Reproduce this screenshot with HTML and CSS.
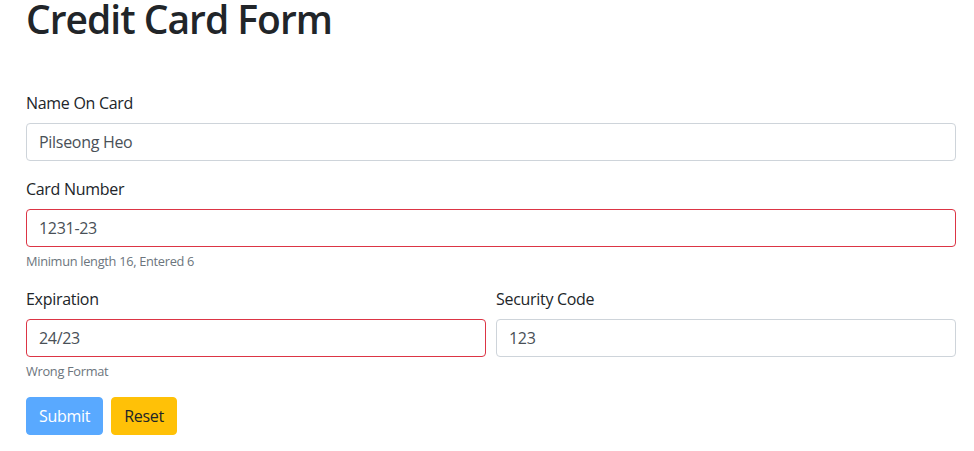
FILE: index.html
```html
<!DOCTYPE html>
<html lang="en">
<head>
<meta charset="utf-8">
<title>Credit Card Form</title>
<link rel="stylesheet" href="styles.css">
</head>
<body>
<div class="container">
  <h1 class="title">Credit Card Form</h1>
  <form class="form">
    <div class="form-group">
      <label class="label" for="name">Name On Card</label>
      <input class="input" id="name" type="text" value="Pilseong Heo">
    </div>
    <div class="form-group">
      <label class="label" for="num">Card Number</label>
      <input class="input invalid" id="num" type="text" value="1231-23">
      <small class="help">Minimun length 16, Entered 6</small>
    </div>
    <div class="form-row">
      <div class="form-group col">
        <label class="label" for="exp">Expiration</label>
        <input class="input invalid" id="exp" type="text" value="24/23">
        <small class="help">Wrong Format</small>
      </div>
      <div class="form-group col">
        <label class="label" for="cvc">Security Code</label>
        <input class="input" id="cvc" type="text" value="123">
      </div>
    </div>
    <div class="actions">
      <button class="btn btn-primary" type="submit" disabled>Submit</button>
      <button class="btn btn-warning" type="button">Reset</button>
    </div>
  </form>
</div>
</body>
</html>
```
FILE: styles.css
```css
* { box-sizing: border-box; }
html, body { margin: 0; padding: 0; background: #fff; }
body {
  font-family: "Open Sans", "Noto Sans", sans-serif;
  font-size: 16px;
  line-height: 1.5;
  color: #212529;
  letter-spacing: -0.3px;
}
.container {
  padding: 0 18px 0 26px;
}
.title {
  margin: 0;
  font-size: 39px;
  font-weight: 600;
  line-height: 38px;
  letter-spacing: -1px;
}
.form { margin-top: 53px; }
.form-group { margin-bottom: 16px; }
.label {
  display: block;
  margin-bottom: 8px;
}
.input {
  display: block;
  width: 100%;
  height: 38px;
  padding: 6px 12px;
  font: inherit;
  letter-spacing: inherit;
  color: #495057;
  background: #fff;
  border: 1px solid #ced4da;
  border-radius: 4px;
}
.input.invalid { border-color: #dc3545; }
.help {
  display: block;
  margin-top: 4px;
  font-size: 12.8px;
  line-height: 20px;
  color: #6c757d;
}
.form-row {
  display: flex;
  gap: 10px;
}
.col { flex: 1 1 0; min-width: 0; }
.actions {
  display: flex;
  gap: 8px;
}
.btn {
  height: 38px;
  padding: 6px 12px;
  font: inherit;
  letter-spacing: inherit;
  border: 1px solid transparent;
  border-radius: 4px;
}
.btn-primary {
  color: #fff;
  background: #59a9ff;
  border-color: #59a9ff;
}
.btn-warning {
  color: #212529;
  background: #ffc107;
  border-color: #ffc107;
}
```
